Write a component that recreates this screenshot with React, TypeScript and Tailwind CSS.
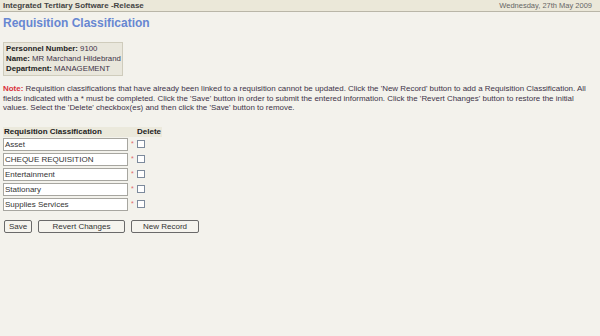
import React from 'react';

const rows = ['Asset', 'CHEQUE REQUISITION', 'Entertainment', 'Stationary', 'Supplies Services'];

const font = { fontFamily: '"Liberation Sans", Arial, sans-serif' };

export default function App() {
  return (
    <div className="w-[600px] h-[336px] bg-[#f3f2ec] text-[#3d3348] overflow-hidden" style={font}>
      <div className="h-[12px] bg-[#ebe8d9] border-b border-[#b9b6a8] flex justify-between items-center px-[3px] text-[8px]">
        <span className="font-bold text-[#444]">Integrated Tertiary Software -Release</span>
        <span className="text-[#666] text-[7.5px] mr-[5px]">Wednesday, 27th May 2009</span>
      </div>

      <h1 className="px-[3px] mt-[4px] text-[12px] font-bold text-[#6787d2] leading-[15px]">Requisition Classification</h1>

      <div className="ml-[3px] mt-[11px] w-[120px] bg-[#e9e7dc] border border-[#cfccbc] px-[2px] py-[1px] text-[7.8px] leading-[10px] whitespace-nowrap">
        <div><span className="font-bold text-[#222]">Personnel Number:</span> 9100</div>
        <div><span className="font-bold text-[#222]">Name:</span> MR Marchand Hildebrand</div>
        <div><span className="font-bold text-[#222]">Department:</span> MANAGEMENT</div>
      </div>

      <p className="px-[3px] mt-[8px] text-[7.95px] leading-[9.5px] whitespace-nowrap">
        <span className="font-bold text-[#d9303a]">Note:</span> Requisition classifications that have already been linked to a requisition cannot be updated. Click the 'New Record' button to add a Requisition Classification. All
        <br />
        fields indicated with a * must be completed. Click the 'Save' button in order to submit the entered information. Click the 'Revert Changes' button to restore the initial
        <br />
        values. Select the 'Delete' checkbox(es) and then click the 'Save' button to remove.
      </p>

      <div className="ml-[3px] mt-[14px] w-[159px] text-[8px]">
        <div className="flex bg-[#ebe9dc] h-[10px] items-center font-bold text-[#222]">
          <span className="w-[134px] pl-[1px]">Requisition Classification</span>
          <span>Delete</span>
        </div>
        {rows.map(r => (
          <div key={r} className="flex items-center h-[15px]">
            <div className="w-[125px] h-[13px] bg-white border border-[#a7a6a0] pl-[1px] leading-[11px] text-[#333]">{r}</div>
            <span className="ml-[3px] text-[#e06a6a] text-[7px]">*</span>
            <span className="ml-[3px] w-[8px] h-[8px] border border-[#7c8a9c] bg-white"></span>
          </div>
        ))}
      </div>

      <div className="flex ml-[4px] mt-[8px] gap-[6px] text-[8px] text-[#333]">
        <button className="h-[13px] w-[28px] border border-[#6a6a6a] rounded-[2px] bg-[#f5f4ee] leading-[11px]">Save</button>
        <button className="h-[13px] w-[87px] border border-[#6a6a6a] rounded-[2px] bg-[#f5f4ee] leading-[11px]">Revert Changes</button>
        <button className="h-[13px] w-[68px] border border-[#6a6a6a] rounded-[2px] bg-[#f5f4ee] leading-[11px]">New Record</button>
      </div>
    </div>
  );
}
